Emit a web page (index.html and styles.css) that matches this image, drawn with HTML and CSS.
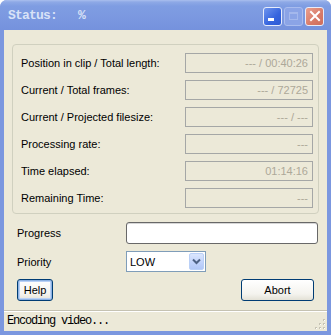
FILE: index.html
```html
<!DOCTYPE html>
<html lang="en">
<head>
  <meta charset="UTF-8">
  <title>Status</title>
  <link rel="stylesheet" href="styles.css">
</head>
<body>
  <div class="window">
    <div class="titlebar">
      <span class="title">Status:   %</span>
      <div class="controls">
        <span class="ctl ctl-min"><span class="bar"></span></span>
        <span class="ctl ctl-max"><span class="box"></span></span>
        <span class="ctl ctl-close">
          <svg width="12" height="12" viewBox="0 0 12 12"><path d="M2 2 L10 10 M10 2 L2 10" stroke="#fff" stroke-width="2" stroke-linecap="square"/></svg>
        </span>
      </div>
    </div>

    <div class="client">
      <div class="group">
        <div class="row"><span class="label">Position in clip / Total length:</span><span class="field">--- / 00:40:26</span></div>
        <div class="row"><span class="label">Current / Total frames:</span><span class="field">--- / 72725</span></div>
        <div class="row"><span class="label">Current / Projected filesize:</span><span class="field">--- / ---</span></div>
        <div class="row"><span class="label">Processing rate:</span><span class="field">---</span></div>
        <div class="row"><span class="label">Time elapsed:</span><span class="field">01:14:16</span></div>
        <div class="row"><span class="label">Remaining Time:</span><span class="field">---</span></div>
      </div>

      <div class="form-row progress-row">
        <span class="form-label">Progress</span>
        <div class="progress"></div>
      </div>

      <div class="form-row priority-row">
        <span class="form-label">Priority</span>
        <div class="select">
          <span class="select-value">LOW</span>
          <span class="select-btn">
            <svg width="9" height="7" viewBox="0 0 9 7"><path d="M1 1.5 L4.5 5 L8 1.5" fill="none" stroke="#4d6185" stroke-width="2"/></svg>
          </span>
        </div>
      </div>

      <div class="buttons">
        <button class="btn btn-focus">Help</button>
        <button class="btn btn-abort">Abort</button>
      </div>

      <div class="statusbar">
        <span class="status-text">Encoding video...</span>
        <span class="grip">
          <svg width="11" height="11" viewBox="0 0 11 11">
            <g fill="#c6c3b4">
              <rect x="8" y="0" width="2" height="2"/>
              <rect x="4" y="4" width="2" height="2"/><rect x="8" y="4" width="2" height="2"/>
              <rect x="0" y="8" width="2" height="2"/><rect x="4" y="8" width="2" height="2"/><rect x="8" y="8" width="2" height="2"/>
            </g>
            <g fill="#fff">
              <rect x="9" y="1" width="1" height="1"/>
              <rect x="5" y="5" width="1" height="1"/><rect x="9" y="5" width="1" height="1"/>
              <rect x="1" y="9" width="1" height="1"/><rect x="5" y="9" width="1" height="1"/><rect x="9" y="9" width="1" height="1"/>
            </g>
          </svg>
        </span>
      </div>
    </div>
  </div>
</body>
</html>
```

FILE: styles.css
```css
html, body {
  margin: 0;
  padding: 0;
  background: #ffffff;
}
.window {
  width: 331px;
  height: 335px;
  box-sizing: border-box;
  display: flex;
  flex-direction: column;
  background: #7b97df;
  border-radius: 7px 7px 0 0;
  padding: 0 4px 4px 4px;
  font-family: "Liberation Sans", Arial, sans-serif;
}
.titlebar {
  height: 30px;
  flex: none;
  display: flex;
  align-items: center;
  margin: 0 -4px;
  padding: 0 8px 0 8px;
  border-radius: 7px 7px 0 0;
  background: linear-gradient(#aabfee 0, #8ea9e6 2px, #7f9de2 6px, #7b98e0 60%, #7592dd 100%);
}
.title {
  flex: 1;
  white-space: pre;
  font-family: "Liberation Mono", "DejaVu Sans Mono", monospace;
  font-weight: bold;
  font-size: 13px;
  letter-spacing: -0.8px;
  color: #d8e2f7;
  margin-top: 1px;
}
.controls {
  display: flex;
  gap: 2px;
  margin-right: -1px;
  margin-top: 2px;
}
.ctl {
  width: 19px;
  height: 19px;
  box-sizing: border-box;
  border: 1px solid #e6ecfb;
  border-radius: 3px;
  display: flex;
  align-items: center;
  justify-content: center;
  position: relative;
}
.ctl-min {
  background: linear-gradient(135deg, #6f95ee, #3564de 60%, #2e5bd4);
}
.ctl-min .bar {
  position: absolute;
  left: 4px;
  bottom: 4px;
  width: 6px;
  height: 3px;
  background: #ffffff;
}
.ctl-max {
  background: #8ba4e6;
  border-color: #a9bcee;
}
.ctl-max .box {
  width: 9px;
  height: 8px;
  box-sizing: border-box;
  border: 1px solid #a4b8ec;
  border-top-width: 2px;
}
.ctl-close {
  background: linear-gradient(135deg, #e9a08f, #d87a68 60%, #cf6d5c);
}
.client {
  flex: 1;
  display: flex;
  flex-direction: column;
  background: #ece9d8;
  padding: 14px 0 0 0;
  font-size: 11px;
  color: #000000;
}
.group {
  margin: 0 8px;
  border: 1px solid #d0d0bf;
  border-radius: 4px;
  padding: 8px 5px 5px 8px;
  display: flex;
  flex-direction: column;
  gap: 7px;
}
.row {
  display: flex;
  align-items: center;
  justify-content: space-between;
  height: 20px;
}
.field {
  width: 128px;
  height: 20px;
  box-sizing: border-box;
  border: 1px solid #a5a7a6;
  text-align: right;
  padding: 3px 4px 0 0;
  color: #aca899;
}
.form-row {
  display: flex;
  align-items: center;
  padding-left: 13px;
}
.form-label {
  width: 109px;
}
.progress-row {
  margin-top: 8px;
  height: 22px;
}
.progress {
  width: 192px;
  height: 22px;
  box-sizing: border-box;
  border: 1px solid #686868;
  border-radius: 3px;
  background: #ffffff;
  box-shadow: inset 0 1px 0 #d6d6d6;
}
.priority-row {
  margin-top: 7px;
  height: 21px;
}
.select {
  width: 80px;
  height: 21px;
  box-sizing: border-box;
  border: 1px solid #7f9db9;
  background: #ffffff;
  display: flex;
  align-items: center;
  justify-content: space-between;
  padding: 1px;
}
.select-value {
  padding-left: 2px;
}
.select-btn {
  width: 15px;
  height: 17px;
  box-sizing: border-box;
  border: 1px solid #bad0f7;
  border-radius: 2px;
  background: linear-gradient(#dbe6fd, #c0d2fb 60%, #b1c7f7);
  display: flex;
  align-items: center;
  justify-content: center;
}
.buttons {
  display: flex;
  justify-content: space-between;
  margin-top: 7px;
  padding: 0 13px 0 13px;
}
.btn {
  font-family: "Liberation Sans", Arial, sans-serif;
  font-size: 11px;
  height: 22px;
  box-sizing: border-box;
  border: 1px solid #003c74;
  border-radius: 3px;
  background: linear-gradient(#ffffff, #f4f3ee 70%, #e3e1d6);
  color: #000000;
  padding: 0;
  margin: 0;
}
.btn-focus {
  width: 36px;
  box-shadow: inset 0 0 0 1px #8db2e3, inset 0 0 0 2px #b9d1f6;
}
.btn-abort {
  width: 73px;
}
.statusbar {
  margin-top: auto;
  height: 20px;
  border-top: 1px solid #c5c2b2;
  box-shadow: inset 0 1px 0 #ffffff;
  display: flex;
  align-items: center;
  justify-content: space-between;
  padding: 0 1px 0 3px;
}
.status-text {
  font-family: "Liberation Mono", "DejaVu Sans Mono", monospace;
  font-size: 12px;
  letter-spacing: -1.2px;
  white-space: pre;
}
.grip {
  align-self: flex-end;
  display: flex;
  margin-bottom: 1px;
}
```
